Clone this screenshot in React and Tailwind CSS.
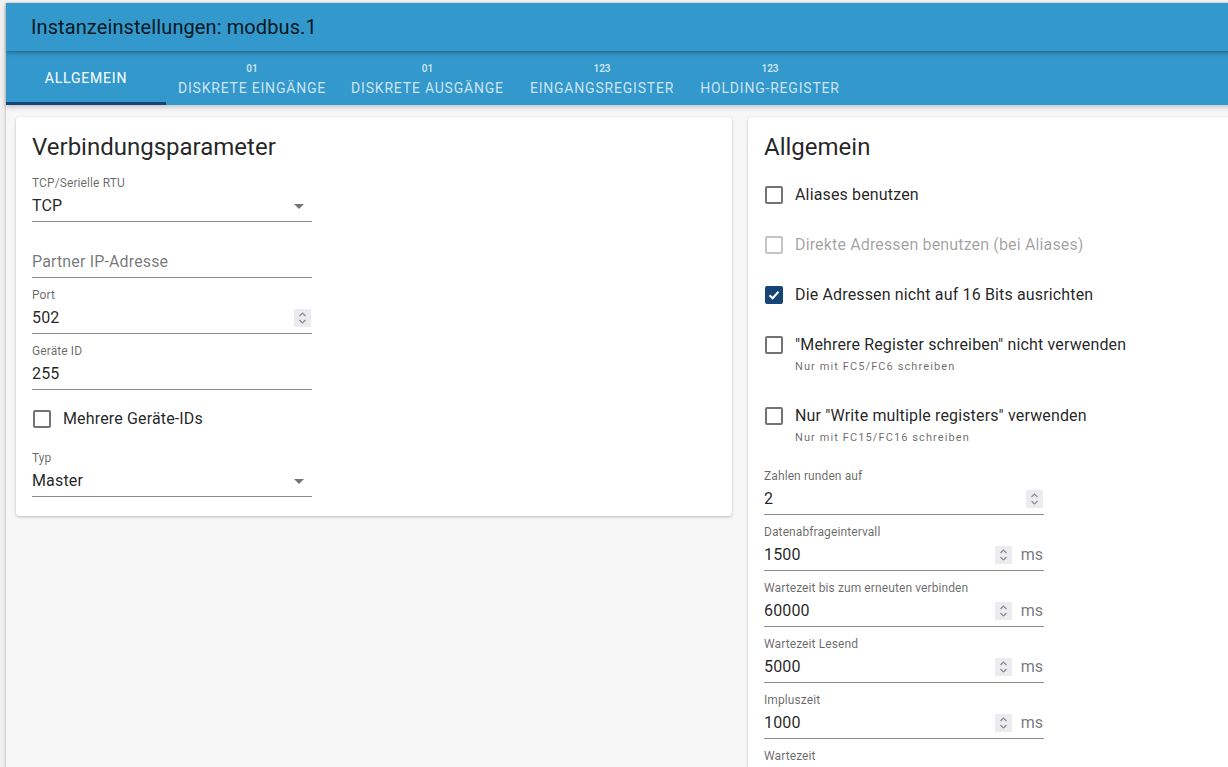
import React from 'react';

const FONT = { fontFamily: 'Roboto, "Liberation Sans", Arial, sans-serif' };

const tabs = [
  { label: 'Allgemein', icon: null, active: true, w: 'w-[160px]' },
  { label: 'Diskrete Eingänge', icon: '01', w: 'w-[172px]' },
  { label: 'Diskrete Ausgänge', icon: '01', w: 'w-[179px]' },
  { label: 'Eingangsregister', icon: '123', w: 'w-[170px]' },
  { label: 'Holding-Register', icon: '123', w: 'w-[166px]' },
];

const Spinner = () => (
  <div className="flex h-[18px] w-[17px] items-center justify-center bg-[#ebebf0]">
    <svg width="9" height="14" viewBox="0 0 9 14" fill="none" stroke="#8a8a8a" strokeWidth="1.2">
      <path d="M1.5 5 L4.5 2 L7.5 5" />
      <path d="M1.5 9 L4.5 12 L7.5 9" />
    </svg>
  </div>
);

const DropArrow = () => (
  <svg width="24" height="24" viewBox="0 0 24 24" className="mr-[1px]">
    <path d="M7 10l5 5 5-5z" fill="rgba(0,0,0,0.54)" />
  </svg>
);

const Field = ({ label, value, placeholder, select, spin, unit, className = '' }) => (
  <div className={`w-[280px] ${className}`}>
    <div className="h-[16px] text-[12px] leading-[16px] tracking-[0.1px] text-black/60">{label || ''}</div>
    <div className="flex h-[31px] items-center border-b border-black/45">
      <div
        className={`flex-1 text-[16px] leading-[24px] tracking-[0.15px] ${
          placeholder ? 'text-black/55' : 'text-black/87'
        }`}
      >
        {placeholder || value}
      </div>
      {select && <DropArrow />}
      {spin && (
        <div className={unit ? 'mr-[9px]' : 'mr-[1px]'}>
          <Spinner />
        </div>
      )}
      {unit && <div className="mr-[1px] text-[16px] leading-[24px] text-black/55">{unit}</div>}
    </div>
  </div>
);

const Check = ({ checked, disabled, label, helper, className = '' }) => (
  <div className={`flex items-start ${className}`}>
    <div className="ml-[-2px] mr-[9px] flex h-[24px] w-[24px] items-center justify-center">
      {checked ? (
        <div className="flex h-[18px] w-[18px] items-center justify-center rounded-[2px] bg-[#164477]">
          <svg width="14" height="14" viewBox="0 0 14 14" fill="none" stroke="white" strokeWidth="2">
            <path d="M2.5 7.2 L5.6 10.2 L11.5 3.8" />
          </svg>
        </div>
      ) : (
        <div
          className={`h-[18px] w-[18px] rounded-[2px] border-2 ${
            disabled ? 'border-[#c4c4c4]' : 'border-[#737373]'
          }`}
        />
      )}
    </div>
    <div>
      <div
        className={`text-[16px] leading-[24px] tracking-[0.15px] ${
          disabled ? 'text-black/38' : 'text-black/87'
        }`}
      >
        {label}
      </div>
      {helper && (
        <div className="mt-[2px] text-[11px] leading-[16px] tracking-[1.1px] text-black/60">{helper}</div>
      )}
    </div>
  </div>
);

const App = () => {
  return (
    <div className="h-[767px] w-[1228px] overflow-hidden bg-[#f0f0f0] pl-[6px] pt-[3px]" style={FONT}>
      <div className="h-[800px] w-[1500px] bg-[#f7f7f7] shadow-[-1px_0_2px_rgba(0,0,0,0.15)]">
        <div className="relative z-20 flex h-[48px] items-center bg-[#3399cc] pl-[25px] text-[20px] tracking-[0.1px] text-black/87 shadow-[0_2px_4px_rgba(0,0,0,0.3)]">
          Instanzeinstellungen: modbus.1
        </div>
        <div className="relative z-10 flex h-[54px] bg-[#3399cc] shadow-[0_2px_5px_rgba(0,0,0,0.22)]">
          {tabs.map(t => (
            <div
              key={t.label}
              className={`relative flex flex-col items-center justify-center ${t.w} text-[14px] font-normal uppercase tracking-[0.8px] ${
                t.active ? 'text-white' : 'text-white/75'
              }`}
            >
              {t.icon && (
                <div className="mt-[2px] text-[10px] font-semibold leading-[14px] tracking-normal">{t.icon}</div>
              )}
              <div className={`leading-[18px] ${t.icon ? 'mt-[3px]' : ''}`}>{t.label}</div>
              {t.active && <div className="absolute bottom-0 left-0 h-[3px] w-full bg-[#164477]" />}
            </div>
          ))}
        </div>

        <div className="flex gap-4 pl-[10px] pt-[12px]">
          <div className="w-[716px] shrink-0 self-start rounded-[4px] bg-white px-4 pb-[19px] pt-4 shadow-[0_1px_3px_rgba(0,0,0,0.25)]">
            <div className="text-[24px] leading-[28px] text-black/87">Verbindungsparameter</div>
            <Field className="mt-[14px]" label="TCP/Serielle RTU" value="TCP" select />
            <Field className="mt-[9px]" placeholder="Partner IP-Adresse" />
            <Field className="mt-[9px]" label="Port" value="502" spin />
            <Field className="mt-[9px]" label="Geräte ID" value="255" />
            <Check className="mt-[17px]" label="Mehrere Geräte-IDs" />
            <Field className="mt-[19px]" label="Typ" value="Master" select />
          </div>

          <div className="w-[716px] shrink-0 rounded-[4px] bg-white px-4 pt-4 shadow-[0_1px_3px_rgba(0,0,0,0.25)]">
            <div className="text-[24px] leading-[28px] text-black/87">Allgemein</div>
            <Check className="mt-[22px]" label="Aliases benutzen" />
            <Check className="mt-[26px]" label="Direkte Adressen benutzen (bei Aliases)" disabled />
            <Check className="mt-[26px]" label="Die Adressen nicht auf 16 Bits ausrichten" checked />
            <Check
              className="mt-[26px]"
              label={'"Mehrere Register schreiben" nicht verwenden'}
              helper="Nur mit FC5/FC6 schreiben"
            />
            <Check
              className="mt-[29px]"
              label={'Nur "Write multiple registers" verwenden'}
              helper="Nur mit FC15/FC16 schreiben"
            />
            <Field className="mt-[22px]" label="Zahlen runden auf" value="2" spin />
            <Field className="mt-[9px]" label="Datenabfrageintervall" value="1500" spin unit="ms" />
            <Field className="mt-[9px]" label="Wartezeit bis zum erneuten verbinden" value="60000" spin unit="ms" />
            <Field className="mt-[9px]" label="Wartezeit Lesend" value="5000" spin unit="ms" />
            <Field className="mt-[9px]" label="Impluszeit" value="1000" spin unit="ms" />
            <Field className="mt-[9px]" label="Wartezeit" value="" />
          </div>
        </div>
      </div>
    </div>
  );
};

export default App;
